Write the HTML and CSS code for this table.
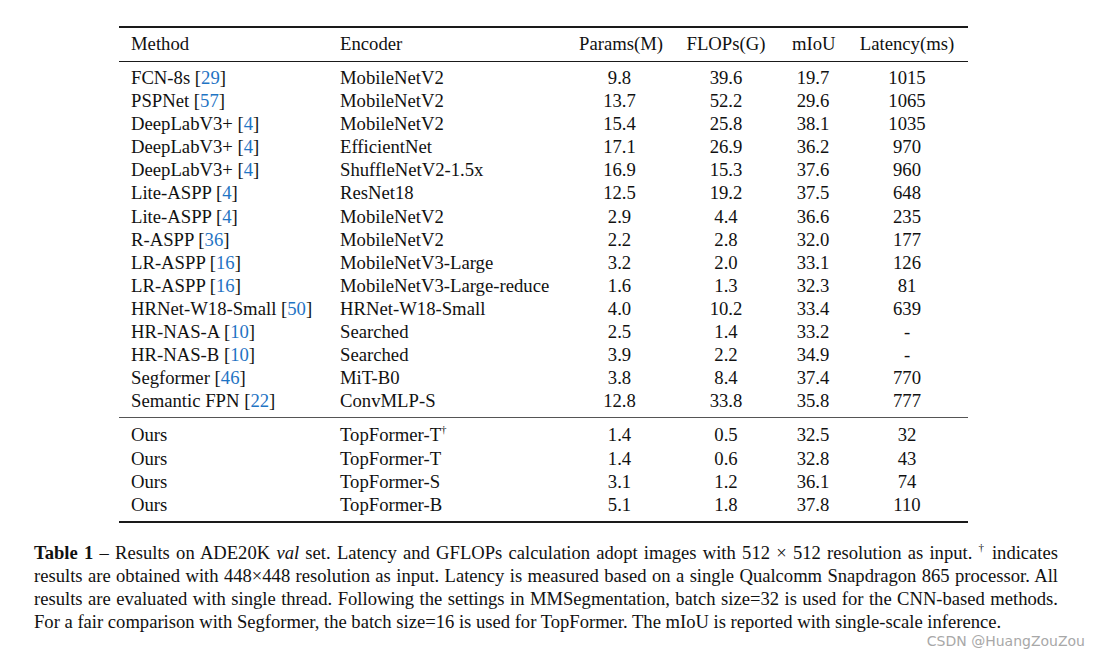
FILE: index.html
```html
<!DOCTYPE html>
<html>
<head>
<meta charset="utf-8">
<link rel="stylesheet" href="styles.css">
</head>
<body>
<div class="page">
  <table class="results">
    <colgroup>
      <col class="c-method"><col class="c-enc"><col class="c-params"><col class="c-flops"><col class="c-miou"><col class="c-lat">
    </colgroup>
    <thead>
      <tr><th class="l">Method</th><th class="l">Encoder</th><th>Params(M)</th><th>FLOPs(G)</th><th>mIoU</th><th>Latency(ms)</th></tr>
    </thead>
    <tbody>
      <tr class="first"><td class="l">FCN-8s [<span class="ref">29</span>]</td><td class="l">MobileNetV2</td><td>9.8</td><td>39.6</td><td>19.7</td><td>1015</td></tr>
      <tr><td class="l">PSPNet [<span class="ref">57</span>]</td><td class="l">MobileNetV2</td><td>13.7</td><td>52.2</td><td>29.6</td><td>1065</td></tr>
      <tr><td class="l">DeepLabV3+ [<span class="ref">4</span>]</td><td class="l">MobileNetV2</td><td>15.4</td><td>25.8</td><td>38.1</td><td>1035</td></tr>
      <tr><td class="l">DeepLabV3+ [<span class="ref">4</span>]</td><td class="l">EfficientNet</td><td>17.1</td><td>26.9</td><td>36.2</td><td>970</td></tr>
      <tr><td class="l">DeepLabV3+ [<span class="ref">4</span>]</td><td class="l">ShuffleNetV2-1.5x</td><td>16.9</td><td>15.3</td><td>37.6</td><td>960</td></tr>
      <tr><td class="l">Lite-ASPP [<span class="ref">4</span>]</td><td class="l">ResNet18</td><td>12.5</td><td>19.2</td><td>37.5</td><td>648</td></tr>
      <tr><td class="l">Lite-ASPP [<span class="ref">4</span>]</td><td class="l">MobileNetV2</td><td>2.9</td><td>4.4</td><td>36.6</td><td>235</td></tr>
      <tr><td class="l">R-ASPP [<span class="ref">36</span>]</td><td class="l">MobileNetV2</td><td>2.2</td><td>2.8</td><td>32.0</td><td>177</td></tr>
      <tr><td class="l">LR-ASPP [<span class="ref">16</span>]</td><td class="l">MobileNetV3-Large</td><td>3.2</td><td>2.0</td><td>33.1</td><td>126</td></tr>
      <tr><td class="l">LR-ASPP [<span class="ref">16</span>]</td><td class="l">MobileNetV3-Large-reduce</td><td>1.6</td><td>1.3</td><td>32.3</td><td>81</td></tr>
      <tr><td class="l">HRNet-W18-Small [<span class="ref">50</span>]</td><td class="l">HRNet-W18-Small</td><td>4.0</td><td>10.2</td><td>33.4</td><td>639</td></tr>
      <tr><td class="l">HR-NAS-A [<span class="ref">10</span>]</td><td class="l">Searched</td><td>2.5</td><td>1.4</td><td>33.2</td><td>-</td></tr>
      <tr><td class="l">HR-NAS-B [<span class="ref">10</span>]</td><td class="l">Searched</td><td>3.9</td><td>2.2</td><td>34.9</td><td>-</td></tr>
      <tr><td class="l">Segformer [<span class="ref">46</span>]</td><td class="l">MiT-B0</td><td>3.8</td><td>8.4</td><td>37.4</td><td>770</td></tr>
      <tr class="last"><td class="l">Semantic FPN [<span class="ref">22</span>]</td><td class="l">ConvMLP-S</td><td>12.8</td><td>33.8</td><td>35.8</td><td>777</td></tr>
    </tbody>
    <tbody class="ours">
      <tr class="first"><td class="l">Ours</td><td class="l">TopFormer-T<sup class="dag">†</sup></td><td>1.4</td><td>0.5</td><td>32.5</td><td>32</td></tr>
      <tr><td class="l">Ours</td><td class="l">TopFormer-T</td><td>1.4</td><td>0.6</td><td>32.8</td><td>43</td></tr>
      <tr><td class="l">Ours</td><td class="l">TopFormer-S</td><td>3.1</td><td>1.2</td><td>36.1</td><td>74</td></tr>
      <tr class="last"><td class="l">Ours</td><td class="l">TopFormer-B</td><td>5.1</td><td>1.8</td><td>37.8</td><td>110</td></tr>
    </tbody>
  </table>
  <p class="caption"><b>Table 1</b> – Results on ADE20K <i>val</i> set. Latency and GFLOPs calculation adopt images with 512 × 512 resolution as input. <sup class="dag">†</sup> indicates results are obtained with 448×448 resolution as input. Latency is measured based on a single Qualcomm Snapdragon 865 processor. All results are evaluated with single thread. Following the settings in MMSegmentation, batch size=32 is used for the CNN-based methods. For a fair comparison with Segformer, the batch size=16 is used for TopFormer. The mIoU is reported with single-scale inference.</p>
  <div class="watermark">CSDN @HuangZouZou</div>
</div>
</body>
</html>
```

FILE: styles.css
```css
html, body {
  margin: 0;
  padding: 0;
  background: #ffffff;
}
body {
  font-family: "Liberation Serif", "Times New Roman", serif;
  color: #111111;
  width: 1099px;
  height: 653px;
  overflow: hidden;
}
.page {
  position: relative;
  width: 1099px;
  height: 653px;
  padding: 26px 0 0 34px;
  box-sizing: border-box;
}
.results {
  margin-left: 85px;
  width: 849px;
  border-collapse: collapse;
  table-layout: fixed;
  font-size: 18.7px;
  border-top: 2px solid #1a1a1a;
  border-bottom: 2px solid #1a1a1a;
}
.c-method { width: 209px; }
.c-enc { width: 239px; }
.c-params { width: 105px; }
.c-flops { width: 108px; }
.c-miou { width: 66px; }
.c-lat { width: 122px; }
.results th, .results td {
  padding: 0 12px;
  text-align: center;
  font-weight: normal;
  white-space: nowrap;
  height: 23.1px;
  line-height: 23.1px;
}
.results .l { text-align: left; }
.results thead th {
  height: 32px;
  padding-top: 0;
  padding-bottom: 1px;
  border-bottom: 1.5px solid #1a1a1a;
}
.results tr.first td { padding-top: 4px; }
.results tr.last td { padding-bottom: 5px; }
.results tbody.ours { border-top: 1px solid #555555; }
.results tbody.ours tr.first td { padding-top: 5px; }
.ref { color: #1f74c4; }
.dag {
  font-size: 11px;
  line-height: 0;
  vertical-align: baseline;
  position: relative;
  top: -8px;
}
.caption {
  width: 1024px;
  margin: 18px 0 0 0;
  font-size: 18.6px;
  line-height: 23px;
  text-align: justify;
}
.watermark {
  position: absolute;
  right: 14px;
  bottom: 4px;
  font-family: "DejaVu Sans", "Liberation Sans", sans-serif;
  font-size: 14px;
  color: #a8a8a8;
}
```
